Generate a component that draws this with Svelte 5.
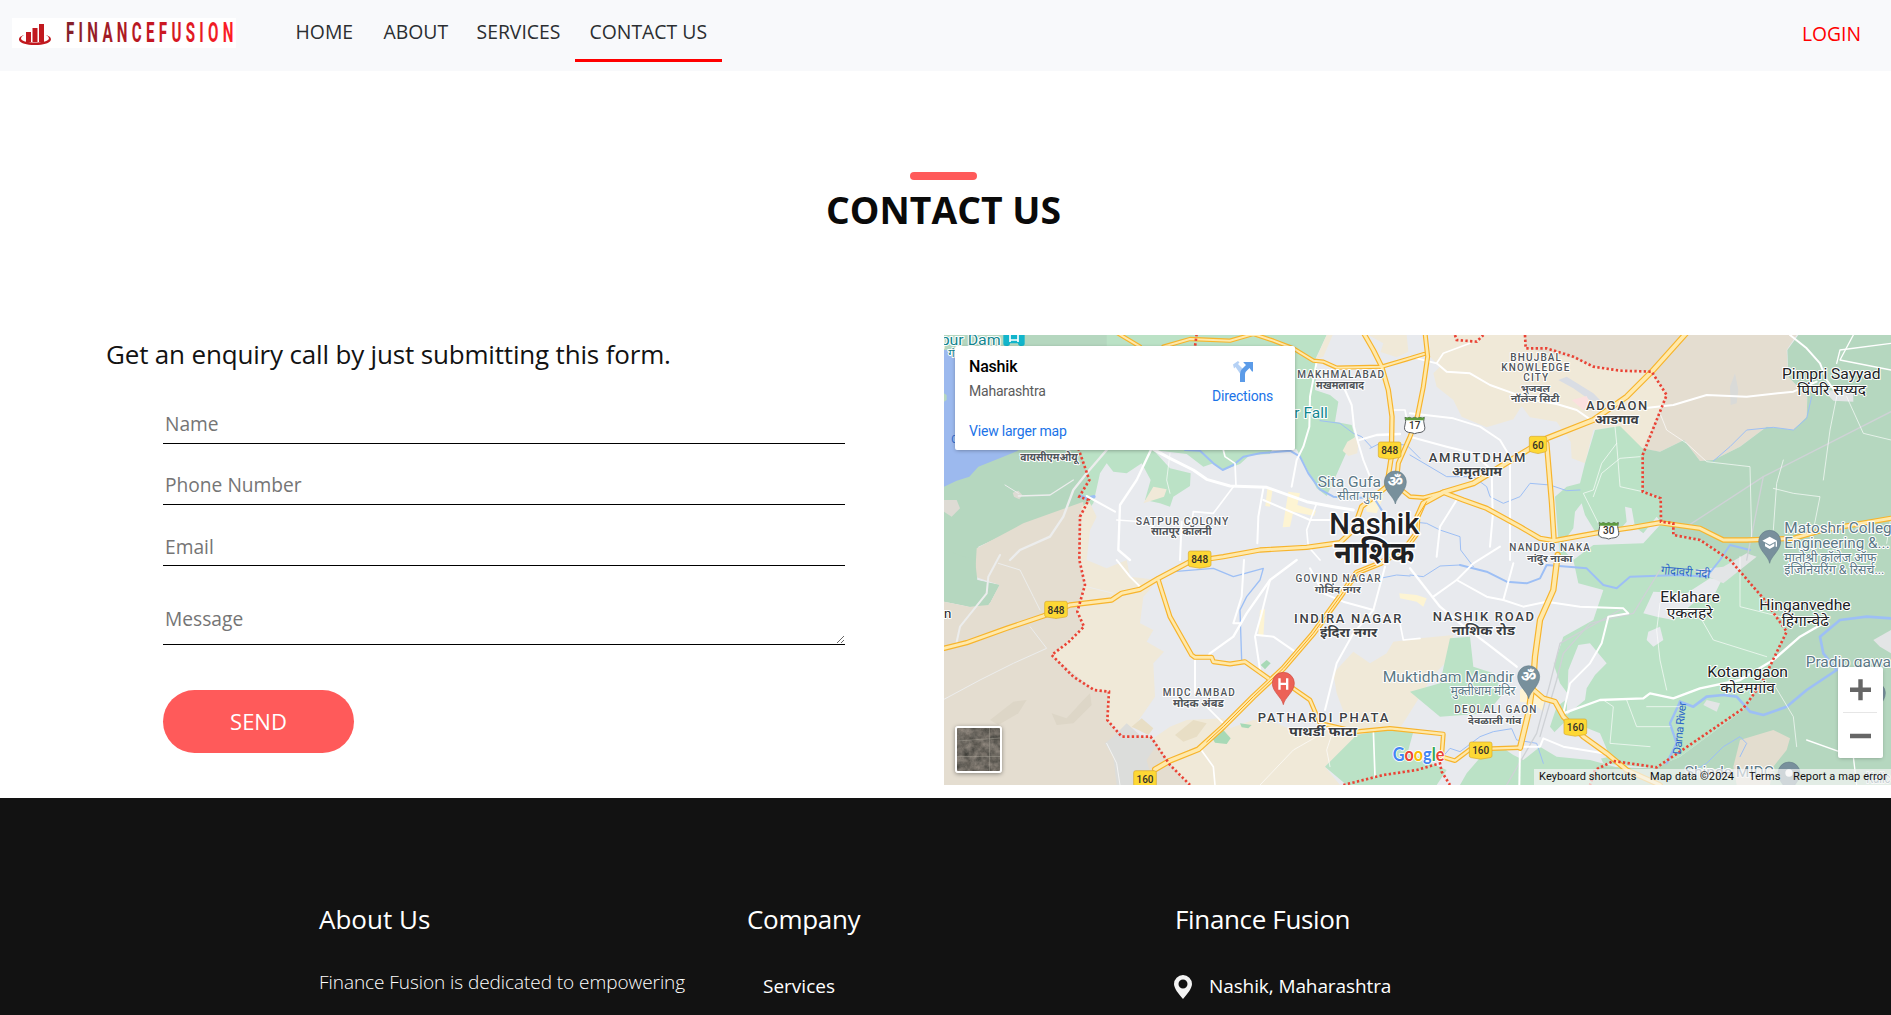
<script>
  const nav = [
    { label: 'HOME', key: 'home' },
    { label: 'ABOUT', key: 'about' },
    { label: 'SERVICES', key: 'services' },
    { label: 'CONTACT US', key: 'contact', active: true }
  ];

  // Map geometry: three map units per screen pixel.
  const areas = [
    { c: '#bbe2c6', p: '12,15 1160,15 1125,90 1130,115 1125,180 1170,195 1195,215 1185,275 1235,285 1245,320 1220,365 1180,455 1160,498 1130,475 1100,415 1070,358 1000,352 990,372 930,375 900,402 850,420 820,400 790,410 740,372 640,360 690,415 752,430 750,468 700,500 690,530 660,520 615,510 632,450 605,400 560,430 520,425 500,400 480,430 460,520 440,545 400,500 12,500' },
    { c: '#f0e9d8', p: '1245,322 1255,340 1252,370 1225,378 1208,362 1222,335' },
    { c: '#f0e9d8', p: '1160,15 1178,15 1150,80 1128,88' },
    { c: '#f0e9d8', p: '640,470 680,478 672,500 610,520' },
    { c: '#b5d7bf', p: '12,15 500,15 500,355 420,360 448,450 420,500 445,515 300,565 115,650 108,750 178,765 150,820 90,830 12,815' },
    { c: '#9cb9ee', p: '12,60 130,60 200,340 235,362 190,380 115,410 88,440 50,452 12,470' },
    { c: '#b5d7bf', p: '12,190 20,195 20,210 12,215' },
    { c: '#e4ddd0', p: '110,655 250,580 430,515 420,690 435,760 412,850 432,890 385,937 335,975 462,1080 505,1085 502,1170 545,1220 632,1220 690,1300 745,1365 12,1365 12,815 90,830 150,820 178,765 105,740' },
    { c: '#b5d7bf', p: '12,660 105,690 112,750 178,765 145,825 90,830 12,812' },
    { c: '#f0e9d8', p: '448,515 470,560 450,600 440,690 500,715 560,690 570,740 655,750 610,800 600,880 640,900 620,935 672,965 640,1000 645,1100 590,1180 560,1220 502,1170 505,1085 462,1080 335,975 432,890 412,850 435,760 420,690 425,530' },
    { c: '#dcdddb', p: '520,1220 560,1180 610,1225 660,1230 620,1290 640,1365 530,1365 520,1280 495,1240' },
    { c: '#f0e9d8', p: '640,1225 690,1190 740,1170 850,1165 870,1195 940,1170 1000,1175 1090,1215 1220,1170 1190,1090 1180,1030 1240,965 1290,1000 1340,970 1360,935 1440,925 1540,915 1525,990 1480,1035 1430,1115 1380,1195 1260,1210 1155,1310 1200,1365 745,1365 690,1300' },
    { c: '#bbe2c6', p: '1155,1310 1250,1215 1330,1200 1420,1205 1405,1260 1450,1290 1520,1320 1490,1365 1220,1365' },
    { c: '#bbe2c6', p: '1580,1330 1640,1260 1690,1255 1720,1275 1750,1290 1800,1250 1850,1280 1950,1290 2060,1320 2140,1365 1560,1365' },
    { c: '#bbe2c6', p: '1410,1085 1500,1060 1530,925 1590,920 1600,1010 1660,1030 1690,1090 1640,1150 1500,1160' },
    { c: '#f0e9d8', p: '1285,15 1400,15 1405,65 1370,82 1322,66 1330,40' },
    { c: '#f0e9d8', p: '1470,15 1760,15 1755,55 1900,85 1960,110 2135,125 2180,195 2110,375 2060,320 2020,290 1960,300 1935,400 1895,385 1892,335 1850,275 1770,262 1745,228 1720,268 1640,292 1565,260 1540,210 1490,170 1480,130 1500,110 1470,80' },
    { c: '#e4ddd0', p: '1755,15 2570,15 2540,60 2545,140 2602,200 2600,260 2560,300 2480,290 2400,350 2320,390 2280,393 2232,330 2160,365 2108,357 2180,195 2135,125 1960,110 1900,85 1757,55' },
    { c: '#b5d7bf', p: '2575,15 2853,15 2853,1365 1950,1365 1970,1310 2140,1315 2220,1280 2410,1140 2465,1060 2540,905 2470,810 2370,690 2280,630 2200,615 2200,580 2165,575 2165,505 2108,485 2106,355 2160,365 2232,330 2280,393 2320,390 2400,350 2480,290 2560,300 2600,260 2602,200 2545,140 2542,60' },
    { c: '#bbe2c6', p: '1965,300 2040,288 2107,355 2108,485 2165,505 2165,575 2200,580 2200,615 2280,630 2370,690 2470,810 2540,905 2465,1060 2410,1140 2220,1280 2140,1315 1990,1300 1960,1240 1880,1250 1830,1190 1850,1130 1890,1100 1860,1060 1840,1000 1870,900 1930,870 1880,860 1850,790 1860,690 1845,500 1880,470 1920,460 1935,400' },
    { c: '#e8eaee', p: '1900,595 1905,545 1925,520 1935,555 1975,620 2030,610 2060,575 2055,530 2075,535 2085,590 2110,610 2150,560 2165,580 2110,640 1960,645 1900,690 1860,650' },
    { c: '#e8eaee', p: '1845,690 1900,690 1915,760 1990,780 1960,870 1870,920 1840,1010 1835,800' },
    { c: '#e8eaee', p: '1885,1020 1915,945 1950,940 2000,1000 1965,1035 1940,1075 1935,1110 1880,1155' },
    { c: '#e8eaee', p: '2110,850 2140,785 2240,790 2310,745 2345,750 2320,800 2260,820 2200,870 2150,860' },
    { c: '#e8eaee', p: '2125,905 2160,890 2170,930 2140,950 2120,930' },
    { c: '#e8eaee', p: '1880,1170 1980,1210 2010,1280 1960,1290 1880,1265 1840,1210' },
    { c: '#e3e5e6', p: '2300,1110 2340,1120 2330,1145 2290,1125' },
    { c: '#e3e5e6', p: '2650,180 2740,185 2740,215 2680,212' },
    { c: '#d9dad8', p: '2370,170 2385,130 2395,180 2390,220 2372,225' },
    { c: '#e3e5e6', p: '2800,930 2853,900 2853,970 2820,950' },
    { c: '#e3e5e6', p: '2260,720 2350,710 2420,670 2450,680 2350,760' },
    { c: '#e3ddcf', p: '2380,1310 2400,1230 2500,1200 2550,1225 2540,1260 2500,1310 2490,1365 2390,1365' },
    { c: '#d9dde4', p: '1855,150 1880,140 1960,190 1985,215 1950,210 1900,175' },
    { c: '#fbe0df', p: '1895,210 1940,198 1950,220 1930,240' },
    { c: '#a7d9b6', p: '962,1005 980,990 992,1000 975,1018' },
    { c: '#a7d9b6', p: '900,1180 935,1185 925,1195 905,1192' },
    { c: '#a7d9b6', p: '815,1220 850,1200 872,1225 860,1242 825,1238' },
    { c: '#fdf4d3', p: '982,476 998,478 990,530 976,528' },
    { c: '#fdf4d3', p: '1045,485 1080,490 1072,525 1128,542 1122,558 1060,545 1050,590 1028,592' },
    { c: '#fdf4d3', p: '1270,490 1310,480 1330,500 1310,550 1280,545' },
    { c: '#fdf4d3', p: '960,840 975,838 970,920 955,915' },
    { c: '#fdf4d3', p: '1378,790 1430,795 1460,805 1450,830 1430,815 1380,805' },
    { c: '#fdf4d3', p: '1740,1080 1780,1060 1820,1110 1810,1145 1780,1120 1740,1115' },
    { c: '#ddd6c7', p: '150,1170 220,1115 260,1110 235,1150 175,1185' },
    { c: '#ddd6c7', p: '335,1150 380,1165 430,1110 450,1090 455,1125 400,1180 350,1185' },
    { c: '#e8deC5', p: '705,1215 760,1170 800,1180 770,1220 730,1235' },
    { c: '#e8dec5', p: '575,1190 605,1165 640,1195 625,1215' },
    { c: '#dedbd4', p: '12,510 50,510 60,535 35,560 12,545' },
    { c: '#dedbd4', p: '218,488 235,482 247,495 238,508 222,500' }
  ];

  const rivers = [
    { w: 3, p: '1140,272 1200,280 1240,310 1265,320 1295,352' },
    { w: 6, p: '735,360 780,362 820,400 848,420 880,405 910,380 960,370 1050,362 1080,380 1105,430 1140,478 1180,500 1240,505 1300,500 1325,540' },
    { w: 3, p: '1290,355 1320,340 1400,345 1440,385' },
    { w: 3, p: '1410,375 1520,440 1600,440 1640,470 1650,500 1690,520 1740,500 1770,460 1830,465 1880,482 1920,480' },
    { w: 3, p: '1410,575 1460,580 1500,600 1560,620 1562,660 1600,710' },
    { w: 3, p: '2320,393 2370,350 2420,300 2500,292 2560,300 2600,265 2615,200' },
    { w: 3, p: '1410,735 1450,740 1500,708 1560,705' },
    { w: 6, p: '1560,705 1640,725 1700,755 1760,760 1800,745 1820,705 1940,715 1990,765 2030,775 2070,740 2220,735 2300,740 2340,690 2370,645 2430,660' },
    { w: 8, p: '2853,865 2780,860 2700,870 2640,920 2650,970 2690,1020 2600,1080 2540,1130 2470,1155 2430,1145 2390,1100 2350,1095 2300,1100 2260,1130 2220,1115' },
    { w: 7, p: '2220,1115 2190,1180 2210,1240 2180,1300' },
    { w: 4, p: '700,725 820,715 880,740 970,715 960,750 920,800 900,840 905,990' },
    { w: 3, p: '1320,745 1370,735 1410,738' },
    { w: 3, p: '1500,1290 1530,1255 1560,1265 1620,1220 1660,1205 1715,1196 1730,1230 1790,1240 1810,1300' },
    { w: 3, p: '2250,1330 2300,1300 2350,1250 2400,1220 2420,1240 2400,1280' },
    { w: 10, p: '420,498 440,505 462,500' }
  ];

  const minor = [
    { w: 7, p: '635,355 590,450 540,525 535,660 570,690' },
    { w: 9, p: '635,355 690,385 760,420 800,448 870,468 980,472 1100,515 1180,530 1240,540' },
    { w: 5, p: '880,470 820,550 760,545 755,580' },
    { w: 6, p: '970,475 955,560 952,640' },
    { w: 6, p: '970,510 1110,570 1170,570' },
    { w: 5, p: '1130,520 1100,600 1105,650 1140,690' },
    { w: 6, p: '725,575 720,690' },
    { w: 6, p: '440,498 525,545' },
    { w: 4, p: '530,570 600,575 640,590' },
    { w: 3, p: '690,370 680,450 690,490' },
    { w: 6, p: '1130,95 1110,200 1108,290 1090,350 1070,390 1055,470' },
    { w: 6, p: '1215,180 1235,225 1242,290 1255,340 1270,390 1290,440' },
    { w: 7, p: '1258,330 1310,315 1380,312' },
    { w: 5, p: '1350,240 1395,240 1400,265' },
    { w: 6, p: '1410,250 1540,265 1620,290 1680,330 1710,380 1710,690' },
    { w: 6, p: '1410,320 1520,350 1600,370 1655,420 1658,560 1650,650' },
    { w: 6, p: '1550,510 1500,590 1490,680' },
    { w: 5, p: '1410,80 1490,100 1510,70 1590,40' },
    { w: 6, p: '1490,100 1520,125 1590,130 1650,165 1720,190 1780,210 1850,222 1910,240 1960,275' },
    { w: 5, p: '850,360 855,380 885,400 888,468' },
    { w: 6, p: '912,690 905,800 880,880 900,880' },
    { w: 7, p: '1070,690 990,750 920,850 880,920 810,970 805,980' },
    { w: 6, p: '990,750 965,850 945,920 960,1020' },
    { w: 6, p: '950,915 1000,920 1065,965' },
    { w: 6, p: '1110,715 1150,790 1210,815 1300,840 1335,710' },
    { w: 6, p: '1300,840 1240,910 1190,1000 1155,1140' },
    { w: 6, p: '765,985 765,1090' },
    { w: 5, p: '800,1130 850,1180' },
    { w: 6, p: '530,690 570,740 600,770' },
    { w: 5, p: '780,1255 820,1310 825,1365' },
    { w: 5, p: '1330,860 1380,880 1390,930 1440,925' },
    { w: 7, p: '1410,715 1500,830 1560,880 1640,940 1730,1010' },
    { w: 6, p: '1480,800 1550,750 1600,700 1680,650' },
    { w: 6, p: '1550,750 1640,800 1690,810 1720,700' },
    { w: 6, p: '1690,810 1750,830 1820,815 1920,830 2050,835 2065,850 2005,860 1985,940 1950,1000 1890,1060 1870,1150' },
    { w: 7, p: '1870,1150 1980,1110 2110,1105 2130,1090 2200,1105 2280,1075 2400,1050 2500,990 2580,920 2650,880' },
    { w: 6, p: '1740,1250 1800,1250 1810,1225 1870,1250 1990,1270' },
    { w: 6, p: '1740,1250 1738,1365' },
    { w: 5, p: '1300,1200 1305,1340' },
    { w: 3, p: '2025,290 2030,340 1985,400 1960,480 1930,490 1980,590' },
    { w: 3, p: '2030,340 2040,470 2108,485' },
    { w: 3, p: '2100,380 2040,385 1985,430 1960,500' },
    { w: 6, p: '2110,235 2200,225 2300,195 2420,200 2560,185 2630,155' },
    { w: 6, p: '2550,15 2600,55 2640,100 2660,150 2690,190' },
    { w: 4, p: '2690,100 2700,60 2853,40' },
    { w: 4, p: '2740,15 2700,90 2853,120' },
    { w: 3, p: '2690,200 2670,300 2650,450' },
    { w: 3, p: '2720,200 2770,310 2853,330' },
    { w: 3, p: '2160,250 2180,300 2240,340 2300,395 2430,410 2435,620' },
    { w: 3, p: '2530,390 2510,460 2500,600' },
    { w: 3, p: '2500,475 2560,490 2640,500 2620,600' },
    { w: 3, p: '2160,820 2150,900 2160,990 2180,1080' },
    { w: 3, p: '2280,860 2320,930 2480,980' },
    { w: 3, p: '1990,1110 2020,1130 2010,1240 2130,1250' },
    { w: 3, p: '2060,1110 2090,1190 2190,1190' },
    { w: 3, p: '2120,1130 2220,1130' },
    { w: 3, p: '2400,680 2400,830 2600,880 2640,850' },
    { w: 3, p: '2500,1060 2560,1160 2570,1250' },
    { w: 3, p: '2840,640 2853,560' },
    { w: 4, p: '2750,1365 2740,1280 2600,1230' },
    { w: 3, p: '960,1365 1060,1260 1130,1220' },
    { w: 3, p: '500,1240 530,1300 540,1365' },
    { w: 3, p: '1180,1200 1160,1260 1170,1310' }
  ];

  const trails = [
    { w: 7, p: '500,360 440,430 400,480 370,560 330,620 240,660 210,690' },
    { w: 4, p: '235,498 330,495 400,450' },
    { w: 3, p: '195,465 235,490' },
    { w: 6, p: '180,675 145,740 140,790 60,890 48,945' },
    { w: 3, p: '175,700 240,720 280,800 300,840' },
    { w: 3, p: '270,890 320,955 220,1000 120,1050 12,1108' },
    { w: 3, p: '420,700 440,770 520,790' }
  ];

  const rails = [
    '2240,590 2470,440 2853,245',
    '2470,440 2420,690',
    '2160,720 2080,850 1950,880 1870,970 1850,1050 1800,1220',
    '1700,1365 1790,1210 1830,1060 1860,940 2040,840'
  ];

  const highways = [
    { w: 13, p: '530,8 600,50' },
    { w: 13, p: '670,50 750,27 870,32 940,12 1000,32 1060,55 1120,92 1150,95 1190,113 1325,110 1400,88 1452,72' },
    { w: 16, p: '1270,8 1300,60 1325,110 1345,180 1356,260 1354,380 1340,470 1265,530 1240,600 1200,638 1100,652 960,660 850,680 750,695 655,745 600,778 545,790 515,810 390,825 310,858 200,895 80,938 12,955' },
    { w: 15, p: '1455,8 1463,80 1450,170 1430,270 1410,320 1375,400 1370,450' },
    { w: 14, p: '1385,480 1410,500 1450,503 1510,487' },
    { w: 15, p: '655,750 690,860 755,975 765,982 815,982 820,995 870,1002 915,995 985,1045' },
    { w: 14, p: '1060,1075 1110,1110 1140,1180 1250,1205 1350,1195 1510,1212 1505,1280 1545,1292 1590,1258 1740,1253' },
    { w: 17, p: '1820,340 1835,520 1842,630' },
    { w: 19, p: '1853,675 1840,780 1800,870 1785,980 1780,1050 1765,1150 1740,1253' },
    { w: 17, p: '1775,1075 1810,1105 1845,1115 1870,1160 1930,1220 2000,1270 2060,1320 2160,1365' },
    { w: 16, p: '1510,487 1570,510 1640,535 1740,590 1800,625 1842,632 1990,605 2080,592 2160,578 2280,595 2350,630 2420,630 2560,625 2650,600 2853,565' },
    { w: 18, p: '2240,8 2135,125 2060,200 1960,270 1820,325 1730,380 1600,460 1510,487 1450,520 1432,560 1430,610 1400,650 1320,700 1250,728 1200,800 1120,910 1030,1015 940,1100 850,1190 775,1258 690,1292 645,1318' }
  ];

  const boundary = [
    '770,12 765,50',
    '415,355 448,450 418,500 446,510 420,560 418,690 435,765 412,845 432,890 385,937 335,975 400,1040 462,1080 507,1085 502,1170 545,1220 632,1220 690,1305 750,1365',
    '1545,15 1550,30 1610,35 1630,15',
    '1755,15 1757,55 1820,55 1900,80 1960,110 2040,122 2135,125 2180,195 2108,375 2108,485 2162,505 2163,575 2200,580 2200,615 2280,630 2370,690 2470,805 2540,905 2465,1060 2410,1135 2220,1265 2150,1312 2020,1293 1965,1320 1950,1365',
    '1210,1365 1330,1335 1430,1320 1500,1300 1505,1325 1530,1365'
  ];

  const shields = [
    { n: '848', x: 1349, y: 362 },
    { n: '60', x: 1794, y: 345, w: 52 },
    { n: '848', x: 779, y: 689 },
    { n: '848', x: 348, y: 840 },
    { n: '160', x: 615, y: 1348 },
    { n: '160', x: 1906, y: 1193 },
    { n: '160', x: 1622, y: 1262 }
  ];

  const labels = [
    { t: 'pur Dam', x: 92, y: 45, s: 42, w: 180, k: 'water' },
    { t: 'गं', x: 34, y: 82, s: 34, k: 'water' },
    { t: 'r Fall', x: 1113, y: 263, s: 44, w: 100, k: 'water' },
    { t: 'वायसीएमओयू', x: 327, y: 392, s: 33, w: 172, k: 'area hi' },
    { t: 'MAKHMALABAD', x: 1202, y: 144, s: 30, w: 260, k: 'area', caps: 1 },
    { t: 'मखमलाबाद', x: 1200, y: 176, s: 31, w: 144, k: 'area hi' },
    { t: 'SATPUR COLONY', x: 726, y: 584, s: 31, w: 278, k: 'area', caps: 1 },
    { t: 'सातपूर कॉलनी', x: 724, y: 616, s: 31, w: 182, k: 'area hi' },
    { t: 'Sita Gufa', x: 1228, y: 471, s: 44, w: 190, k: 'poi' },
    { t: 'सीता गुफा', x: 1259, y: 511, s: 37, w: 134, k: 'poi' },
    { t: 'Nashik', x: 1303, y: 611, s: 86, w: 270, k: 'city' },
    { t: 'नाशिक', x: 1303, y: 699, s: 90, w: 240, k: 'city hi' },
    { t: 'GOVIND NAGAR', x: 1194, y: 756, s: 30, w: 255, k: 'area', caps: 1 },
    { t: 'गोविंद नगर', x: 1193, y: 788, s: 30, w: 138, k: 'area hi' },
    { t: 'INDIRA NAGAR', x: 1223, y: 880, s: 39, w: 322, k: 'town', caps: 1 },
    { t: 'इंदिरा नगर', x: 1226, y: 922, s: 39, w: 172, k: 'town hi' },
    { t: 'MIDC AMBAD', x: 776, y: 1097, s: 30, w: 216, k: 'area', caps: 1 },
    { t: 'मोदक अंबड', x: 775, y: 1130, s: 31, w: 152, k: 'area hi' },
    { t: 'PATHARDI PHATA', x: 1149, y: 1176, s: 39, w: 392, k: 'town', caps: 1 },
    { t: 'पाथर्डी फाटा', x: 1149, y: 1217, s: 39, w: 204, k: 'town hi' },
    { t: 'BHUJBAL', x: 1787, y: 93, s: 30, w: 152, k: 'area', caps: 1 },
    { t: 'KNOWLEDGE', x: 1786, y: 124, s: 30, w: 204, k: 'area', caps: 1 },
    { t: 'CITY', x: 1787, y: 154, s: 30, w: 74, k: 'area', caps: 1 },
    { t: 'भुजबल', x: 1786, y: 186, s: 30, w: 88, k: 'area hi' },
    { t: 'नॉलेज सिटी', x: 1785, y: 216, s: 30, w: 146, k: 'area hi' },
    { t: 'ADGAON', x: 2030, y: 240, s: 39, w: 184, k: 'town', caps: 1 },
    { t: 'आडगाव', x: 2030, y: 282, s: 39, w: 132, k: 'town hi' },
    { t: 'AMRUTDHAM', x: 1611, y: 397, s: 39, w: 290, k: 'town', caps: 1 },
    { t: 'अमृतधाम', x: 1611, y: 439, s: 39, w: 150, k: 'town hi' },
    { t: 'NANDUR NAKA', x: 1829, y: 664, s: 30, w: 242, k: 'area', caps: 1 },
    { t: 'नांदुर नाका', x: 1829, y: 695, s: 30, w: 136, k: 'area hi' },
    { t: 'Pimpri Sayyad', x: 2674, y: 148, s: 45, w: 296, k: 'village' },
    { t: 'पिंपरि सय्यद', x: 2675, y: 194, s: 44, w: 206, k: 'village' },
    { t: 'Matoshri Colleg', x: 2533, y: 609, s: 44, a: 'start', w: 322, k: 'poi' },
    { t: 'Engineering &...', x: 2533, y: 655, s: 44, a: 'start', w: 316, k: 'poi' },
    { t: 'मातोश्री कॉलेज ऑफ', x: 2533, y: 695, s: 36, a: 'start', w: 276, k: 'poi' },
    { t: 'इंजिनियरिंग & रिसर्च...', x: 2533, y: 732, s: 36, a: 'start', w: 300, k: 'poi' },
    { t: 'Eklahare', x: 2250, y: 815, s: 45, w: 178, k: 'village' },
    { t: 'एकलहरे', x: 2249, y: 864, s: 44, w: 138, k: 'village' },
    { t: 'Hinganvedhe', x: 2595, y: 841, s: 45, w: 274, k: 'village' },
    { t: 'हिंगान्वेढे', x: 2596, y: 888, s: 44, w: 142, k: 'village' },
    { t: 'Kotamgaon', x: 2423, y: 1041, s: 45, w: 242, k: 'village' },
    { t: 'कोटमगांव', x: 2423, y: 1089, s: 44, w: 164, k: 'village' },
    { t: 'Pradip gawa', x: 2597, y: 1012, s: 44, a: 'start', w: 256, k: 'poi' },
    { t: 'NASHIK ROAD', x: 1630, y: 873, s: 39, w: 304, k: 'town', caps: 1 },
    { t: 'नाशिक रोड', x: 1630, y: 916, s: 39, w: 190, k: 'town hi' },
    { t: 'Muktidham Mandir', x: 1525, y: 1056, s: 44, w: 394, k: 'poi' },
    { t: 'मुक्तीधाम मंदिर', x: 1629, y: 1095, s: 37, w: 194, k: 'poi' },
    { t: 'DEOLALI GAON', x: 1666, y: 1149, s: 30, w: 246, k: 'area', caps: 1 },
    { t: 'देवळाली गांव', x: 1664, y: 1181, s: 30, w: 160, k: 'area hi' },
    { t: 'Shinde MIDC', x: 2368, y: 1342, s: 44, w: 268, k: 'poi' },
    { t: 'Kalic', x: 2779, y: 1360, s: 42, a: 'start', w: 72, k: 'poi' },
    { t: 'n', x: 12, y: 864, s: 40, a: 'start', k: 'village' }
  ];
</script>

<header class="topbar">
  <div class="brand">
    <svg class="logo" viewBox="0 0 224 30" role="img" aria-label="FinanceFusion">
      <defs>
        <linearGradient id="word" x1="0" x2="1" y1="0" y2="0">
          <stop offset="0" stop-color="#82202a" />
          <stop offset=".5" stop-color="#c21722" />
          <stop offset="1" stop-color="#ff1d27" />
        </linearGradient>
      </defs>
      <g fill="#c1191f">
        <path d="M14 14h5v10h-5zM20.500 10h5v14h-5zM27 6h5v18h-5z" />
        <path d="M12 17C3.500 19.500 5 27 23 27S42.500 19.500 34 17c6 3.500 3 7.500-11 7.500S6 20.500 12 17z" />
      </g>
      <g transform="translate(54 24) scale(.56 1)">
        <text class="word" textLength="299" lengthAdjust="spacing" fill="url(#word)">FINANCEFUSION</text>
      </g>
    </svg>
  </div>
  <nav>
    {#each nav as item}
      <a href="#{item.key}" class={item.key} class:active={item.active}>{item.label}</a>
    {/each}
  </nav>
  <a class="login" href="#login">LOGIN</a>
</header>

<section class="title">
  <span class="bar"></span>
  <h1>CONTACT US</h1>
</section>

<main>
  <section class="enquiry">
    <h2>Get an enquiry call by just submitting this form.</h2>
    <form onsubmit={(e) => e.preventDefault()}>
      <input class="name" type="text" placeholder="Name" />
      <input class="phone" type="text" placeholder="Phone Number" />
      <input class="email" type="text" placeholder="Email" />
      <textarea placeholder="Message"></textarea>
      <button>SEND</button>
    </form>
  </section>

  <section class="map">
    <svg class="canvas" viewBox="12 15 2841 1350" preserveAspectRatio="none">
      <rect x="12" y="15" width="2841" height="1350" fill="#e8eaee" />
      {#each areas as a}<polygon points={a.p} fill={a.c} />{/each}
      <g class="line">
        {#each rivers as r}<polyline points={r.p} stroke="#9dbff5" stroke-width={r.w} />{/each}
        {#each rails as r}<polyline points={r} stroke="#cfd2d6" stroke-width="4" />{/each}
        {#each trails as r}<polyline points={r.p} stroke="#eceded" stroke-width={r.w} />{/each}
        {#each minor as r}<polyline points={r.p} stroke="#fff" stroke-width={r.w} stroke-opacity={r.w < 4 ? 0.65 : 1} />{/each}
        {#each highways as r}<polyline points={r.p} stroke="#f7b42c" stroke-width={r.w} />{/each}
        {#each highways as r}<polyline points={r.p} stroke="#ffe9ab" stroke-width={r.w - 7} />{/each}
        <polyline points="1460,515 1432,560 1430,610 1400,650 1320,700 1250,728 1200,800 1120,910 1030,1015 940,1100 850,1190 800,1236" stroke="#f9a915" stroke-width="3" />
      </g>
      <g class="border">
        {#each boundary as b}<polyline points={b} />{/each}
      </g>

      {#each shields as s}
        <g transform="translate({s.x} {s.y})">
          <path d="M{-(s.w ?? 68) / 2} -20q0-6 6-6h{(s.w ?? 68) - 12}q6 0 6 6v36q0 4-6 5L4 25q-4 1-8 0L{-(s.w ?? 68) / 2 + 6} 21q-6-1-6-5z" fill="#fdd835" stroke="#d9a92d" stroke-width="2" />
          <text class="num" y="11">{s.n}</text>
        </g>
      {/each}
      {#each [{ n: '17', x: 1424, y: 285 }, { n: '30', x: 2006, y: 601 }] as s}
        <g transform="translate({s.x} {s.y})">
          <path d="M-29-23q6 5 13 0q8 6 16 0q8 6 16 0q7 5 13 0q-4 12 0 23q6 18-10 22q-12 1-19 4q-7-3-19-4q-16-4-10-22q4-11 0-23z" fill="#fff" stroke="#5b5f63" stroke-width="3" />
          <path d="M-29-24q6 5 13 0q8 6 16 0q8 6 16 0q7 5 13 0l-2 10h-54z" fill="#5c9c3e" />
          <text class="num" y="11">{s.n}</text>
        </g>
      {/each}

      <!-- Place pins -->
      {#each [{ g: 'ॐ', x: 1366, y: 522 }, { g: 'ॐ', x: 1766, y: 1106 }, { g: 'cap', x: 2489, y: 700 }, { g: 'dot', x: 2547, y: 1395 }, { g: '', x: 2803, y: 1155 }] as p}
        <g transform="translate({p.x} {p.y})">
          <path d="M0 0C-4-22-33-38-33-66a33 33 0 0 1 66 0C33-38 4-22 0 0z" fill="#78909c" stroke="#5d7682" stroke-width="1.500" />
          {#if p.g === 'cap'}
            <path d="M-22-68L0-80l22 12L0-56zM-14-60v9L0-43l14-8v-9L0-52zM18-66h4v16h-4z" fill="#fff" />
          {:else if p.g === 'dot'}
            <circle cy="-66" r="11" fill="#fff" />
          {:else}
            <text class="om" y="-50">{p.g}</text>
          {/if}
        </g>
      {/each}
      <g transform="translate(1030 1124)">
        <path d="M0 0C-4-22-33-38-33-64a33 33 0 0 1 66 0C33-38 4-22 0 0z" fill="#ec6257" stroke="#cf4b41" stroke-width="2" />
        <path d="M-15-79h7v13H8v-13h7v34H8v-14H-8v14h-7z" fill="#fff" />
      </g>
      <g transform="translate(222 30)">
        <path d="M-32-20h64v32q0 6-8 6h-6q-6 0-6-8h-24q0 8-6 8h-6q-8 0-8-6z" fill="#12b5cb" />
        <path d="M-12-16v22M12-16v22M-12 0h24" stroke="#fff" stroke-width="5" />
      </g>

      {#each labels as l}
        <text class="label {l.k}" x={l.x} y={l.y} font-size={l.s} text-anchor={l.a ?? 'middle'} textLength={l.w} lengthAdjust={l.caps ? 'spacing' : 'spacingAndGlyphs'}>{l.t}</text>
      {/each}
      <text class="label river" font-size="36" transform="translate(2162 732) rotate(5)" textLength="148" lengthAdjust="spacingAndGlyphs">गोदावरी नदी</text>
      <text class="label river" font-size="34" transform="translate(2222 1274) rotate(-84)" textLength="158">Darna River</text>
      <text class="label river" font-size="30" x="34" y="339">C</text>

      <text class="google" x="1358" y="1293" textLength="155" lengthAdjust="spacingAndGlyphs"><tspan fill="#4285f4">G</tspan><tspan fill="#ea4335">o</tspan><tspan fill="#fbbc04">o</tspan><tspan fill="#4285f4">g</tspan><tspan fill="#34a853">l</tspan><tspan fill="#ea4335">e</tspan></text>
    </svg>

    <div class="card">
      <div class="place">
        <strong>Nashik</strong>
        <span>Maharashtra</span>
        <a href="#map">View larger map</a>
      </div>
      <div class="directions">
        <svg viewBox="0 0 22 22" width="22" height="22">
          <path d="M1 3.500L6 0l1.500 1.500L6 3l7 7-3 5-2-2.500L3.500 6 2 7.500z" fill="#b5d1f5" />
          <path d="M8 21v-8q0-3 2-5l4-4-2.500-2.500V1H21v9.500h-1L17.500 7 14 10.500q-1 1-1 3V21z" fill="#5b9be8" />
        </svg>
        <a href="#directions">Directions</a>
      </div>
    </div>

    <div class="thumb">
      <svg viewBox="0 0 43 43" width="43" height="43">
        <defs>
          <filter id="terrain" x="0" y="0" width="100%" height="100%" color-interpolation-filters="sRGB">
            <feTurbulence type="fractalNoise" baseFrequency=".14" numOctaves="4" seed="8" />
            <feColorMatrix values=".4 .1 0 0 .18  .36 .1 0 0 .18  .34 .1 0 0 .16  0 0 0 0 1" />
          </filter>
        </defs>
        <rect width="43" height="43" filter="url(#terrain)" />
        <path d="M0 28.500h43M32.500 0v43M0 13l43-3" stroke="#aaa79c" stroke-opacity=".45" fill="none" />
      </svg>
    </div>

    <div class="zoom">
      <svg viewBox="0 0 45 91" width="45" height="91">
        <path d="M12 20.500h8.300v-8.300h4.400v8.300H33v4.400h-8.300v8.300h-4.400v-8.300H12zM12 66.800h21v4.400H12z" fill="#666" />
        <path d="M5 45.500h34" stroke="#e6e6e6" />
      </svg>
    </div>

    <div class="credits">
      <span class="keys">Keyboard shortcuts</span><span class="data">Map data ©2024</span><span class="terms">Terms</span><span>Report a map error</span>
    </div>
  </section>
</main>

<footer>
  <section>
    <h3 class="f-about">About Us</h3>
    <p>Finance Fusion is dedicated to empowering</p>
  </section>
  <section>
    <h3 class="f-company">Company</h3>
    <a class="services-link" href="#services">Services</a>
  </section>
  <section>
    <h3 class="f-brand">Finance Fusion</h3>
    <div class="address">
      <svg viewBox="0 0 18 24" width="18" height="24">
        <path d="M9 0a9 9 0 0 1 9 9c0 4-4.500 10-9 15C4.500 19 0 13 0 9a9 9 0 0 1 9-9zm0 4.500a4.500 4.500 0 1 0 0 9 4.500 4.500 0 0 0 0-9z" fill="#f4f4f4" />
      </svg>
      <span>Nashik, Maharashtra</span>
    </div>
  </section>
</footer>

<style>
  :global(body) {
    overflow: hidden;
    background: #fff;
    font-family: 'Segoe UI', 'Open Sans', 'Noto Sans', sans-serif;
  }
  :global(#app) { height: 1015px; overflow: hidden; display: flex; flex-direction: column; }
  a { color: inherit; text-decoration: none; }
  h1, h2, h3, p { margin: 0; font-weight: 400; white-space: nowrap; }

  .topbar { display: flex; height: 71px; flex: none; background: #f8f9fb; box-sizing: border-box; padding-left: 12px; }
  .brand { width: 224px; height: 30px; margin-top: 18px; background: #fff; }
  .logo { display: block; width: 224px; height: 30px; overflow: visible; }
  .word { font: 700 27px Roboto, sans-serif; }
  nav { display: flex; margin-left: 45px; height: 62px; font-size: 19.400px; color: #2b2e31; }
  nav a { box-sizing: border-box; padding: 0 0 0 14.500px; line-height: 63px; white-space: nowrap; border-bottom: 3px solid transparent; }
  .home { width: 88px; }
  .about { width: 93px; }
  .services { width: 113px; }
  .contact { width: 147px; }
  nav a.active { border-color: #f00; }
  .login { margin-left: auto; width: 89px; line-height: 67px; font-size: 19.300px; color: #f00; }

  .title { flex: none; height: 264px; display: flex; flex-direction: column; align-items: center; padding-right: 4px; }
  .bar { width: 67px; height: 8px; border-radius: 4px; margin-top: 101px; background: #ff5a5a; }
  h1 { font-size: 37.300px; line-height: 50px; margin-top: 5px; font-weight: 700; color: #0a0a0a; }

  main { flex: none; display: flex; height: 463px; }
  .enquiry { width: 944px; box-sizing: border-box; padding-left: 106px; }
  h2 { font-size: 26px; line-height: 38px; margin-bottom: 2px; color: #121212; letter-spacing: -.17px; }
  form { width: 682px; margin-left: 57px; display: flex; flex-direction: column; align-items: flex-start; }
  input, textarea {
    display: block; box-sizing: border-box; width: 682px; padding: 0 2px; border: 0; border-bottom: 1px solid #000;
    background: none; font: 400 19.200px 'Segoe UI', 'Open Sans', 'Noto Sans', sans-serif; outline: 0; border-radius: 0;
  }
  input { height: 38px; padding-bottom: 2px; margin-bottom: 23px; }
  .name { margin-top: 31px; }
  .email { padding-bottom: 0; }
  ::placeholder { color: #757575; opacity: 1; }
  textarea { height: 54px; margin-top: 2px; padding-top: 15px; line-height: 26px; overflow: hidden; resize: vertical; }
  button { width: 191px; height: 63px; margin-top: 45px; padding-bottom: 3px; border: 0; border-radius: 32px; background: #ff5a5a; color: #fff; font: 400 22px 'Segoe UI', 'Open Sans', 'Noto Sans', sans-serif; }

  .map { position: relative; width: 947px; height: 450px; overflow: hidden; font-family: Roboto, sans-serif; }
  .canvas { display: block; width: 947px; height: 450px; font-family: Roboto, 'Noto Sans', sans-serif; }
  .line polyline { fill: none; stroke-linejoin: round; stroke-linecap: round; }
  .border polyline { fill: none; stroke: #ea4335; stroke-width: 8px; stroke-dasharray: 7 7; }
  .label { paint-order: stroke; stroke: #fff; stroke-width: 6px; stroke-linejoin: round; }
  .area { fill: #50555a; font-weight: 500; }
  .town { fill: #3c4043; font-weight: 500; }
  .village { fill: #202124; }
  .city { fill: #202124; font-weight: 500; stroke-width: 9px; }
  .hi { font-weight: 700; }
  .poi { fill: #5b7886; }
  .water { fill: #12868f; }
  .river { fill: #2c66c9; stroke: none; }
  .num { font-size: 30px; font-weight: 500; fill: #33302a; text-anchor: middle; }
  .om { font-size: 46px; fill: #fff; text-anchor: middle; font-weight: 700; }
  .google { font: 500 54px Lato, sans-serif; paint-order: stroke; stroke: #fff; stroke-width: 5px; }
  .google tspan { font-weight: 700; }

  .card { position: absolute; left: 11px; top: 11px; width: 340px; height: 104px; box-sizing: border-box; display: flex; justify-content: space-between; padding: 12px 22px 0 14px; background: #fff; border-radius: 2px; box-shadow: 0 1px 4px -1px rgba(0, 0, 0, .4); font-size: 14px; letter-spacing: -.2px; }
  .place { display: flex; flex-direction: column; line-height: 18px; }
  .place strong { font-weight: 500; color: #000; font-size: 16px; }
  .place span { color: #5b5b5b; margin-top: 6px; }
  .card a { color: #1a73e8; }
  .place a { margin-top: 22px; }
  .directions { display: flex; flex-direction: column; align-items: center; padding-top: 3px; }
  .directions a { line-height: 18px; margin-top: 4px; }
  .thumb { position: absolute; left: 11px; top: 391px; width: 43px; height: 43px; border: 2px solid #fff; border-radius: 3px; box-shadow: 0 1px 4px rgba(0, 0, 0, .4); overflow: hidden; }
  .thumb svg, .zoom svg { display: block; }
  .zoom { position: absolute; left: 894px; top: 332px; width: 45px; height: 91px; background: #fff; border-radius: 2px; box-shadow: 0 1px 4px -1px rgba(0, 0, 0, .3); }
  .credits { position: absolute; right: 0; bottom: 0; height: 16px; display: flex; width: 352px; padding-left: 5px; background: rgba(245, 245, 245, .7); line-height: 16px; font-size: 11px; letter-spacing: .12px; color: #111; white-space: nowrap; }
  .keys { width: 111px; }
  .data { width: 99px; }
  .terms { width: 44px; }

  footer { flex: 1; display: flex; background: #121212; color: #fff; padding: 99px 0 0 319px; }
  footer section { width: 428px; flex: none; }
  h3 { font-size: 26px; line-height: 44px; }
  .f-company { letter-spacing: -.3px; }
  .f-brand { letter-spacing: -.35px; }
  footer p { font-size: 19px; line-height: 30px; margin-top: 26px; color: #fff; font-weight: 300; letter-spacing: -.06px; }
  .services-link { display: block; margin: 30px 0 0 16px; font-size: 19px; line-height: 30px; }
  .address { display: flex; align-items: center; gap: 17px; height: 30px; margin: 30px 0 0 -1px; font-size: 19px; letter-spacing: -.1px; white-space: nowrap; }
  .address svg { position: relative; top: 1px; }
</style>
